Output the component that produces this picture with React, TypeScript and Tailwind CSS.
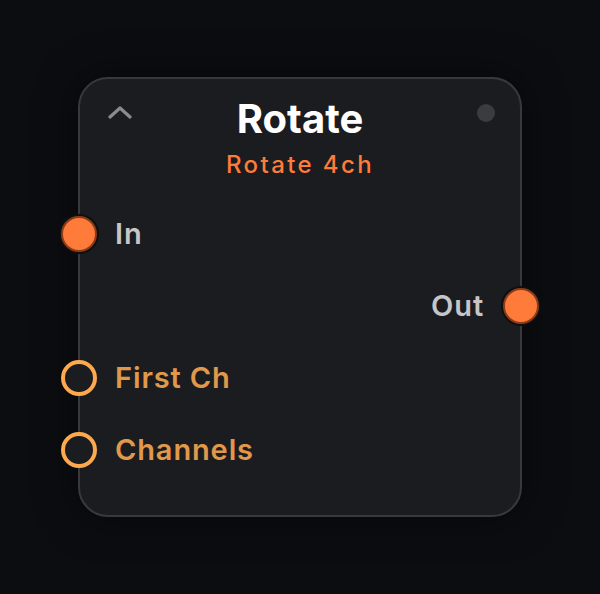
import React from "react";

const font = { fontFamily: "Inter, 'Noto Sans', sans-serif" };

function FilledHandle({ side }: { side: "left" | "right" }) {
  return (
    <div
      className={`absolute top-1/2 -translate-y-1/2 w-[40px] h-[40px] rounded-full bg-[#0f0f11] p-[2px] ${
        side === "left" ? "left-[-21px]" : "right-[-21px]"
      }`}
    >
      <div className="w-full h-full rounded-full bg-[#ff7b3a] border-2 border-[#8d3c17]" />
    </div>
  );
}

function RingHandle() {
  return (
    <div className="absolute top-1/2 -translate-y-1/2 left-[-19px] w-[36px] h-[36px] rounded-full bg-[#1b1c20] border-[4px] border-[#ffa94d]" />
  );
}

export default function App() {
  return (
    <div className="w-[600px] h-[594px] bg-[#0c0d10] flex items-start justify-center pt-[77px]" style={font}>
      <div className="w-[444px] rounded-[30px] border-2 border-[#38393d] bg-[#1b1c20] pt-[16px] pb-[29px] shadow-[0_0_40px_rgba(0,0,0,0.5)]">
        <div className="grid grid-cols-[1fr_auto_1fr] items-start">
          <div className="pl-[28px] pt-[10px]">
            <svg width="24" height="14" viewBox="0 0 24 14" fill="none">
              <path d="M2 12 L12 3 L22 12" stroke="#8a8b8f" strokeWidth="3.2" strokeLinecap="round" strokeLinejoin="round" />
            </svg>
          </div>
          <div className="text-[40px] leading-[48px] font-bold text-white text-center">Rotate</div>
          <div className="flex justify-end pr-[25px] pt-[9px]">
            <div className="w-[18px] h-[18px] rounded-full bg-[#3b3c41]" />
          </div>
        </div>
        <div className="text-center text-[24px] leading-[32px] font-medium tracking-[0.1em] text-[#ff7b3a] mt-[6px]">Rotate 4ch</div>
        <div className="mt-[17px] flex flex-col">
          <div className="relative h-[72px] flex items-center pl-[35px]">
            <FilledHandle side="left" />
            <span className="text-[29px] font-semibold tracking-[0.03em] text-[#c6c6c9]">In</span>
          </div>
          <div className="relative h-[72px] flex items-center justify-end pr-[36px]">
            <span className="text-[29px] font-semibold tracking-[0.03em] text-[#c6c6c9]">Out</span>
            <FilledHandle side="right" />
          </div>
          <div className="relative h-[72px] flex items-center pl-[35px]">
            <RingHandle />
            <span className="text-[29px] font-semibold tracking-[0.03em] text-[#e0984a]">First Ch</span>
          </div>
          <div className="relative h-[72px] flex items-center pl-[35px]">
            <RingHandle />
            <span className="text-[29px] font-semibold tracking-[0.03em] text-[#e0984a]">Channels</span>
          </div>
        </div>
      </div>
    </div>
  );
}
